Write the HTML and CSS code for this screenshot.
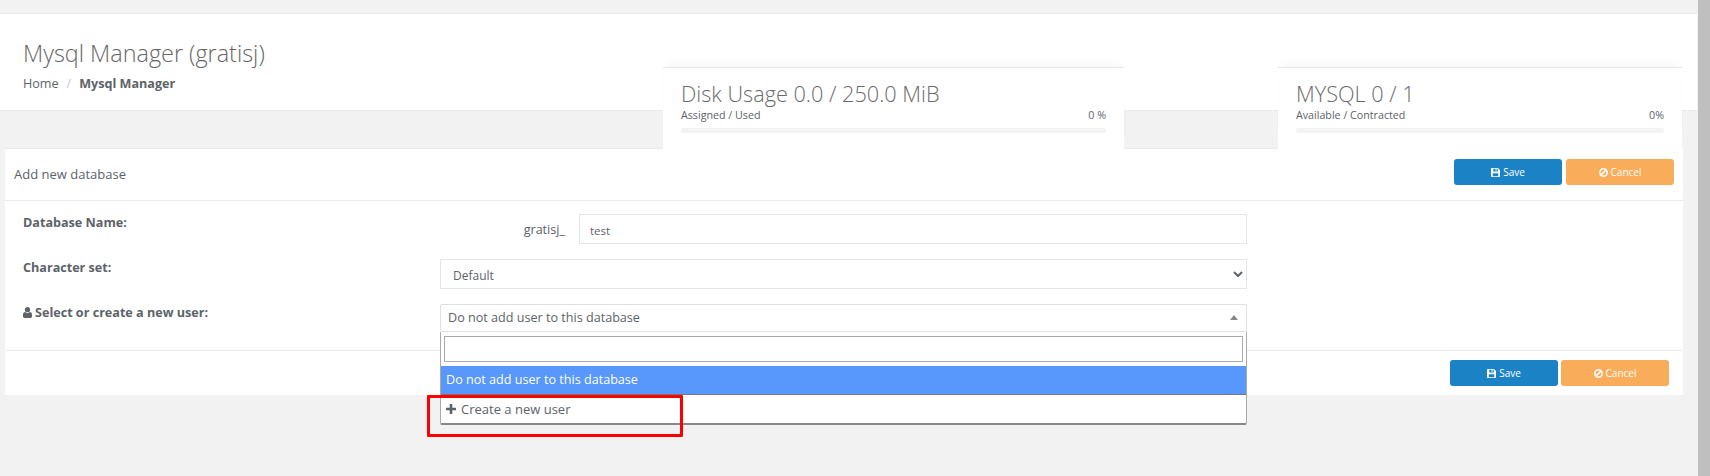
FILE: index.html
```html
<!DOCTYPE html>
<html lang="en">
<head>
<meta charset="utf-8">
<title>Mysql Manager</title>
<link rel="stylesheet" href="styles.css">
</head>
<body>
<div class="page">
  <header class="head">
    <h1 class="title">Mysql Manager (gratisj)</h1>
    <nav class="crumbs"><span>Home</span><span class="sep">/</span><b>Mysql Manager</b></nav>
  </header>

  <section class="stat stat-disk">
    <div class="stat-title">Disk Usage 0.0 / 250.0 MiB</div>
    <div class="stat-sub"><span>Assigned / Used</span><span>0 %</span></div>
    <div class="bar"></div>
  </section>
  <section class="stat stat-mysql">
    <div class="stat-title">MYSQL 0 / 1</div>
    <div class="stat-sub"><span>Available / Contracted</span><span>0%</span></div>
    <div class="bar"></div>
  </section>

  <main class="panel">
    <div class="panel-head">
      <span class="panel-title">Add new database</span>
      <div class="actions">
        <button class="btn btn-save"><svg class="ico" viewBox="0 0 12 12"><path fill="currentColor" fill-rule="evenodd" d="M1 0h8.3L12 2.7V11a1 1 0 0 1-1 1H1a1 1 0 0 1-1-1V1a1 1 0 0 1 1-1zM3 1v3.6h6V1H7.4v2.6H6V1zM2.4 7v4h7.2V7z"/></svg>Save</button>
        <button class="btn btn-cancel"><svg class="ico" viewBox="0 0 12 12"><circle cx="6" cy="6" r="4.9" fill="none" stroke="currentColor" stroke-width="2"/><path d="M2.8 9.2l6.4-6.4" stroke="currentColor" stroke-width="2"/></svg>Cancel</button>
      </div>
    </div>
    <form class="form">
      <label class="lbl">Database Name:</label>
      <div class="prefixed">
        <span class="prefix">gratisj_</span>
        <input class="ctl" type="text" value="test">
      </div>
      <label class="lbl">Character set:</label>
      <select class="ctl sel"><option>Default</option></select>
      <label class="lbl"><svg class="ico-user" viewBox="0 0 10 12"><path fill="currentColor" d="M5 0a2.9 2.9 0 1 1 0 5.8A2.9 2.9 0 0 1 5 0zM2.3 5.4C3 6.2 4 6.7 5 6.7s2-.5 2.7-1.3C9.2 5.5 10 6.6 10 8.8v1.6c0 1-.7 1.6-1.6 1.6H1.6C.7 12 0 11.4 0 10.4V8.8c0-2.2.8-3.3 2.3-3.4z"/></svg>Select or create a new user:</label>
      <div class="combo">
        <div class="combo-value">Do not add user to this database<i class="caret"></i></div>
        <div class="drop">
          <div class="drop-search"><input type="text" class="drop-input"></div>
          <div class="opt opt-on">Do not add user to this database</div>
          <div class="opt opt-new"><svg class="ico-plus" viewBox="0 0 10 10"><path fill="currentColor" d="M3.7 0h2.6v3.7H10v2.6H6.3V10H3.7V6.3H0V3.7h3.7z"/></svg>Create a new user</div>
        </div>
        <div class="mark"></div>
      </div>
    </form>
    <div class="panel-foot">
      <button class="btn btn-save"><svg class="ico" viewBox="0 0 12 12"><path fill="currentColor" fill-rule="evenodd" d="M1 0h8.3L12 2.7V11a1 1 0 0 1-1 1H1a1 1 0 0 1-1-1V1a1 1 0 0 1 1-1zM3 1v3.6h6V1H7.4v2.6H6V1zM2.4 7v4h7.2V7z"/></svg>Save</button>
      <button class="btn btn-cancel"><svg class="ico" viewBox="0 0 12 12"><circle cx="6" cy="6" r="4.9" fill="none" stroke="currentColor" stroke-width="2"/><path d="M2.8 9.2l6.4-6.4" stroke="currentColor" stroke-width="2"/></svg>Cancel</button>
    </div>
  </main>
</div>
<div class="scrollbar"></div>
</body>
</html>
```
FILE: styles.css
```css
* { box-sizing: border-box; }
html, body { height: 100%; }
body {
  margin: 0;
  height: 476px;
  overflow: hidden;
  display: flex;
  background: #f2f2f2;
  font-family: "Open Sans", sans-serif;
  font-size: 12.6px;
  color: #5c6369;
}
.page { position: relative; flex: 1; min-width: 0; padding-top: 13px; padding-right: 1px; }
.scrollbar { width: 12px; background: #bfbfbf; }

.head {
  height: 98px;
  background: #fff;
  border-top: 1px solid #e7ecf1;
  border-bottom: 1px solid #e7ecf1;
  padding: 23px 23px 0;
}
.title { margin: 0; font-size: 23.4px; font-weight: 300; line-height: 33px; color: #666; }
.crumbs { margin-top: 5px; line-height: 18px; display: flex; color: #5c6369; }
.crumbs b { font-weight: 700; }
.sep { margin: 0 8px; color: #c5c5c5; }

.stat {
  position: absolute;
  top: 67px;
  height: 82px;
  background: #fff;
  border-top: 1px solid #e7e7e7;
  box-shadow: 0 -6px 8px -3px rgba(0,0,0,.04);
  padding: 11px 18px 0;
}
.stat-disk { left: 663px; width: 461px; }
.stat-mysql { left: 1278px; width: 404px; }
.stat-title { font-size: 21.7px; font-weight: 300; line-height: 30px; color: #6b6b6b; }
.stat-sub { display: flex; justify-content: space-between; font-size: 10.7px; line-height: 15px; margin-top: -1px; color: #5c6369; }
.bar { height: 5px; margin-top: 5px; background: #f3f3f3; border-radius: 3px; }

.panel { margin: 37px 0 0 5px; width: 1678px; background: #fff; }
.panel-head {
  height: 53px;
  border-top: 1px solid #e7ecf1;
  border-bottom: 1px solid #e7ecf1;
  padding: 10px 9px 0 9px;
  display: flex;
  justify-content: space-between;
}
.panel-title { line-height: 30px; font-size: 13px; }
.actions { display: flex; gap: 4px; }
.btn {
  width: 108px;
  height: 26px;
  border: 0;
  border-radius: 3px;
  color: #fff;
  font: 10px "Open Sans", sans-serif;
  display: inline-flex;
  align-items: center;
  justify-content: center;
  padding: 0;
}
.btn-save { background: #1c82c6; }
.btn-cancel { background: #f9ac5a; }
.ico { width: 9px; height: 9px; margin-right: 3px; }

.form {
  display: grid;
  grid-template-columns: 417px 807px;
  grid-template-rows: 30px 30px 28px;
  row-gap: 15px;
  height: 149px;
  padding: 13px 0 0 18px;
}
.lbl { font-weight: 700; line-height: 17px; display: flex; align-items: center; align-self: start; }
.ico-user { width: 9px; height: 11px; margin-right: 3px; }
.prefixed { display: flex; align-items: center; }
.prefix { width: 125px; text-align: right; margin-right: 14px; padding-top: 1px; }
.ctl {
  flex: 1;
  min-width: 0;
  height: 30px;
  border: 1px solid #e5e5e5;
  background: #fff;
  color: #5c6369;
  font: 11.5px "Open Sans", sans-serif;
  padding: 3px 10px 0;
  outline: 0;
}
.sel { padding: 2px 8px 0; font-size: 12px; }

.combo { position: relative; }
.combo-value {
  height: 28px;
  border: 1px solid #e0e0e0;
  border-radius: 2px;
  line-height: 26px;
  padding-left: 7px;
  font-size: 12.6px;
  position: relative;
}
.caret {
  position: absolute;
  top: 10px;
  right: 8px;
  border: 4px solid transparent;
  border-top: 0;
  border-bottom: 5px solid #888;
}
.drop {
  position: absolute;
  top: 28px;
  left: 0;
  right: 0;
  height: 93px;
  background: #fff;
  border: 1px solid #aaa;
  border-top: 0;
  border-bottom: 2px solid #888;
  border-radius: 0 0 2px 2px;
  z-index: 1;
  font-size: 12.6px;
}
.drop-search { padding: 4px 3px 4px 3px; height: 34px; }
.drop-input { display: block; width: 100%; height: 26px; border: 1px solid #aaa; outline: 0; background: #fff; }
.opt { height: 29px; line-height: 28px; padding-left: 5px; }
.opt-on { background: #5897fb; color: #fff; border-bottom: 1px solid #777; }
.opt-new { display: flex; align-items: center; font-size: 13px; height: 27px; }
.ico-plus { width: 10px; height: 10px; margin-right: 5px; }
.mark {
  position: absolute;
  top: 91px;
  left: -13px;
  width: 256px;
  height: 42px;
  border: 3px solid #f00;
  border-radius: 1px;
  z-index: 2;
}

.panel-foot {
  height: 45px;
  border-top: 1px solid #e7ecf1;
  padding: 9px 14px 0 0;
  display: flex;
  justify-content: flex-end;
  gap: 3px;
}
```
